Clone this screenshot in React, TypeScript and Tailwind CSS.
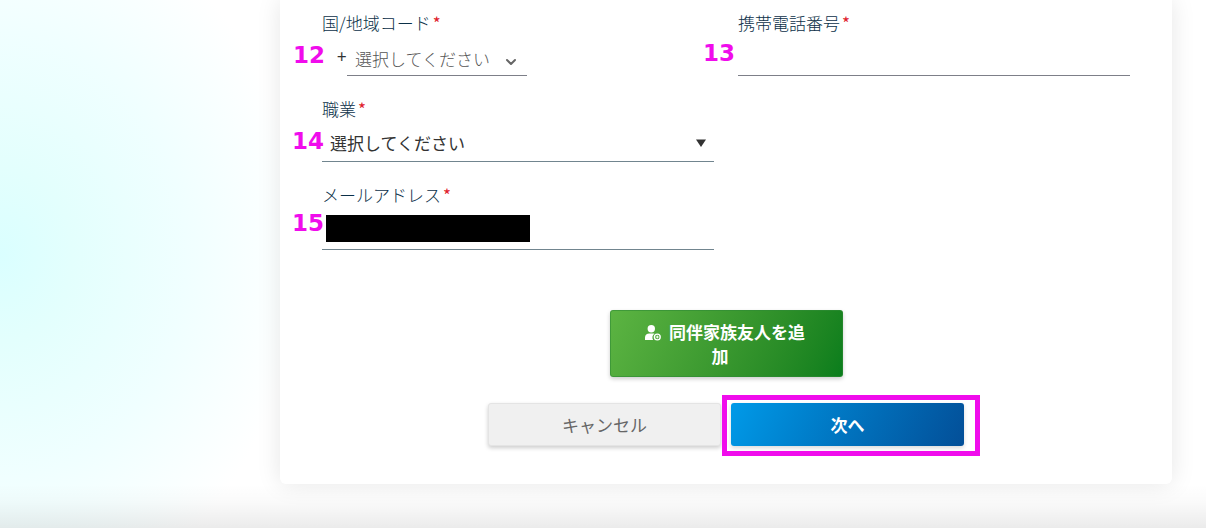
import React, { useState } from "react";
import { FiChevronDown } from "react-icons/fi";

const Marker = ({ children, className }: { children: React.ReactNode; className: string }) => (
  <span className={`absolute font-['DejaVu_Sans',sans-serif] text-[23px] leading-6 font-bold text-[#f00cec] ${className}`}>
    {children}
  </span>
);

const Label = ({ htmlFor, children }: { htmlFor: string; children: React.ReactNode }) => (
  <label htmlFor={htmlFor} className="flex h-6 items-center gap-[2px] font-light text-[#0b3048]">
    {children}
    <span className="font-normal text-[#e0202b]">*</span>
  </label>
);

const AddPersonIcon = () => (
  <svg viewBox="0 0 16 16" className="mr-2 ml-[10px] inline-block h-4 w-4 align-[-2px]" aria-hidden="true">
    <circle cx="6.3" cy="3.8" r="3.7" fill="currentColor" />
    <path d="M0 15v-2.4C0 10.2 1.9 8.600 4.300 8.600h4.200c.3 0 .6 0 .9.100A4.600 4.600 0 0 0 8.100 15z" fill="currentColor" />
    <circle cx="12.300" cy="12" r="2.900" fill="none" stroke="currentColor" strokeWidth="1.400" />
    <path d="M12.300 10.600v2.800M10.900 12h2.800" stroke="currentColor" strokeWidth="1" />
  </svg>
);

const App = () => {
  const [country, setCountry] = useState("");
  const [phone, setPhone] = useState("");
  const [job, setJob] = useState("");
  const [email, setEmail] = useState("");

  return (
    <div className="min-h-screen bg-white bg-[linear-gradient(to_top,rgba(0,0,0,0.08),rgba(0,0,0,0.02)_26px,transparent_44px),radial-gradient(ellipse_300px_360px_at_0_255px,#daffff,#e3fffd_24%,#f0ffff_62%,#ffffff)] pr-[34px] pb-11 pl-[280px] font-['Noto_Sans_CJK_JP',sans-serif] text-[17px] leading-6">
      <form
        onSubmit={(e) => e.preventDefault()}
        className="rounded-b-md bg-white px-[42px] pt-[11px] pb-[38px] shadow-[0_0_24px_rgba(0,0,0,0.1)]"
      >
        <div className="grid grid-cols-2 gap-x-6 gap-y-[21px]">

          <div className="relative">
            <Label htmlFor="country">国/地域コード</Label>
            <Marker className="-left-[29px] top-8">12</Marker>
            <div className="flex h-[41px] items-end pl-[15px]">
              <span className="mb-2 w-[10px] text-[17px] text-[#333]">+</span>
              <div className="relative">
                <select
                  id="country"
                  value={country}
                  onChange={(e) => setCountry(e.target.value)}
                  className="h-8 w-[180px] appearance-none border-b border-[#7d7f88] bg-transparent pb-[2px] pl-2 font-light text-[#555] outline-none"
                >
                  <option value="">選択してください</option>
                </select>
                <FiChevronDown className="pointer-events-none absolute top-[10px] right-2 h-4 w-4 stroke-[3px] text-[#666]" />
              </div>
            </div>
          </div>

          <div className="relative">
            <Label htmlFor="phone">携帯電話番号</Label>
            <Marker className="-left-[35px] top-[30px]">13</Marker>
            <input
              id="phone"
              type="tel"
              value={phone}
              onChange={(e) => setPhone(e.target.value)}
              className="block h-[41px] w-full border-b border-[#7d7f88] px-2 outline-none"
            />
          </div>

          <div className="relative">
            <Label htmlFor="job">職業</Label>
            <Marker className="-left-[30px] top-8">14</Marker>
            <select
              id="job"
              value={job}
              onChange={(e) => setJob(e.target.value)}
              className="block h-[41px] w-full appearance-none border-b border-[#71858f] bg-transparent pt-1 pl-2 text-[#333] outline-none"
            >
              <option value="">選択してください</option>
            </select>
            <svg viewBox="0 0 10 8" className="pointer-events-none absolute top-[42px] right-2 h-2 w-[10px] fill-[#333]" aria-hidden="true">
              <path d="M0 .5h10L5 8z" />
            </svg>
          </div>

          <div className="relative col-start-1">
            <Label htmlFor="email">メールアドレス</Label>
            <Marker className="-left-[30px] top-7">15</Marker>
            <input
              id="email"
              type="email"
              value={email}
              onChange={(e) => setEmail(e.target.value)}
              className="block h-[43px] w-full border-b border-[#71858f] px-2 outline-none"
            />
            <span className="absolute top-8 left-1 h-[27px] w-[204px] bg-black" />
          </div>
        </div>

        <div className="mt-[60px] flex justify-center">
          <button
            type="button"
            className="h-[67px] w-[233px] rounded-[3px] border border-[#2f8a35]/60 bg-linear-115 from-[#5cb442] to-[#087d1c] bg-origin-border pr-9 pl-6 text-center font-bold text-white shadow-[0_2px_4px_rgba(0,0,0,0.2)]"
          >
            <AddPersonIcon />
            同伴家族友人を追加
          </button>
        </div>

        <div className="mt-[26px] flex justify-center gap-[10px]">
          <button
            type="button"
            className="h-[43px] w-[233px] rounded-[3px] border border-[#e4e4e4] bg-[#f0f0f0] text-[#666] shadow-[0_2px_4px_rgba(0,0,0,0.2)]"
          >
            キャンセル
          </button>
          <div className="relative">
            <button
              type="submit"
              className="block h-[43px] w-[233px] rounded-[3px] bg-linear-115 from-[#009ae8] to-[#034f98] font-bold text-white shadow-[0_2px_4px_rgba(0,0,0,0.15)]"
            >
              次へ
            </button>
            <span className="pointer-events-none absolute -top-2 -right-4 -bottom-[10px] -left-[9px] border-5 border-[#f00cec]" />
          </div>
        </div>
      </form>
    </div>
  );
};

export default App;
